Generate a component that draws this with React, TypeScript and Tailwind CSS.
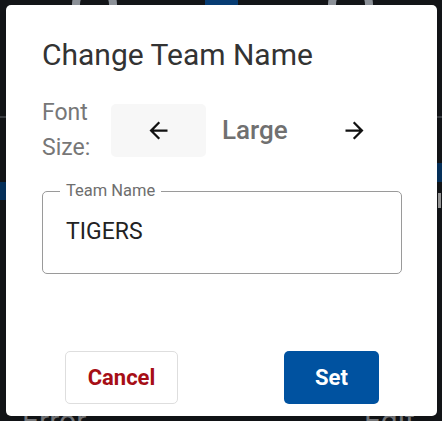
import React from "react";

function ArrowBack({ size = 27 }: { size?: number }) {
  return (
    <svg width={size} height={size} viewBox="0 0 24 24" fill="currentColor">
      <path d="M20 11H7.83l5.59-5.59L12 4l-8 8 8 8 1.41-1.41L7.83 13H20v-2z" />
    </svg>
  );
}

function ArrowForward({ size = 27 }: { size?: number }) {
  return (
    <svg width={size} height={size} viewBox="0 0 24 24" fill="currentColor">
      <path d="M12 4l-1.41 1.41L16.17 11H4v2h12.17l-5.58 5.59L12 20l8-8z" />
    </svg>
  );
}

export default function App() {
  return (
    <div
      className="relative w-[442px] h-[421px] overflow-hidden bg-[#131518]"
      style={{ fontFamily: "Roboto, 'Noto Sans', sans-serif" }}
    >
      {/* page behind the backdrop */}
      <div className="absolute left-[72px] top-[-18px] w-[45px] h-[45px] rounded-full border-[8px] border-[#8b9097]" />
      <div className="absolute left-[328px] top-[-18px] w-[45px] h-[45px] rounded-full border-[8px] border-[#8b9097]" />
      <div className="absolute left-[205px] top-0 w-[33px] h-[8px] bg-[#073c73]" />
      <div className="absolute left-0 top-[116px] w-full h-[2px] bg-[#3a3d42]" />
      <div className="absolute left-0 top-[182px] w-[10px] h-[18px] bg-[#06315c]" />
      <div className="absolute right-0 top-[163px] w-[10px] h-[19px] bg-[#06315c]" />
      <div className="absolute right-[1px] top-[193px] w-[3px] h-[15px] bg-[#9a9a9a]" />
      <div className="absolute left-[22px] top-[406px] text-[30px] leading-none text-[#7d7f83]">Error</div>
      <div className="absolute left-[364px] top-[406px] text-[30px] leading-none text-[#7d7f83]">Edit</div>

      <div className="relative pt-[5px] pl-[6px] pr-[5px]">
        <div className="w-[431px] h-[411px] bg-white rounded-[5px] flex flex-col pt-[32px] pl-[36px] pr-[35px] shadow-lg">
          <h2 className="text-[30px] leading-[36px] text-[#333333] font-normal">Change Team Name</h2>

          <div className="mt-[22px] flex items-center">
            <div className="w-[69px] text-[23px] leading-[35px] text-[#777777]">
              Font
              <br />
              Size:
            </div>
            <button className="w-[95px] h-[53px] rounded-[5px] bg-[#f7f7f7] flex items-center justify-center text-[#111]">
              <ArrowBack />
            </button>
            <div className="w-[100px] pl-[16px] text-[26px] font-medium text-[#707070] leading-[32px]">Large</div>
            <button className="w-[95px] h-[53px] rounded-[5px] flex items-center justify-center text-[#111] pl-[2px]">
              <ArrowForward />
            </button>
          </div>

          <div className="relative mt-[26px] w-[360px] h-[83px] border border-[#9a9a9a] rounded-[5px] pl-[23px] pt-[26px]">
            <span className="absolute left-[17px] top-[-12px] px-[6px] bg-white text-[16.5px] leading-[21px] text-[#6e6e6e]">
              Team Name
            </span>
            <div className="text-[23px] leading-[28px] text-[#222222]">TIGERS</div>
          </div>

          <div className="mt-[77px] flex">
            <button className="ml-[23px] w-[113px] h-[53px] rounded-[5px] border border-[#dedede] bg-white text-[22px] font-bold text-[#a60e16]">
              Cancel
            </button>
            <button className="ml-[106px] w-[95px] h-[53px] rounded-[5px] bg-[#0052a0] text-[22px] font-bold text-white">
              Set
            </button>
          </div>
        </div>
      </div>
    </div>
  );
}
